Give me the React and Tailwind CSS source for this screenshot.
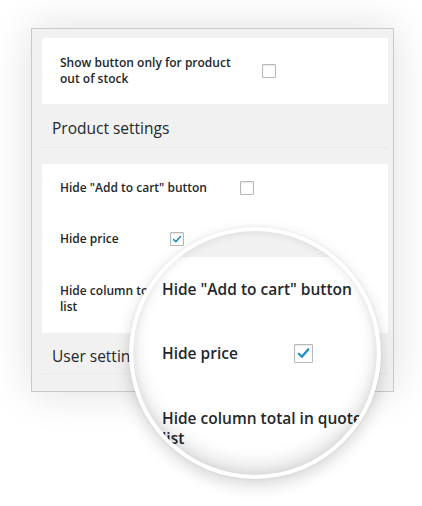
const font = { fontFamily: '"Open Sans", "Noto Sans", sans-serif' };

function Checkbox({ checked, big }) {
  const size = big ? 'w-[19px] h-[19px]' : 'w-[14px] h-[14px]';
  return (
    <span
      className={`${size} shrink-0 inline-flex items-center justify-center bg-white border border-[#b4b9be] rounded-[1px] shadow-[inset_0_1px_2px_rgba(0,0,0,0.1)]`}
    >
      {checked && (
        <svg viewBox="0 0 20 20" className={big ? 'w-[17px] h-[17px]' : 'w-[13px] h-[13px]'}>
          <path d="M4.5 10.2l3.6 3.6 7.6-8.8" fill="none" stroke="#1e8cbe" strokeWidth="2.6" strokeLinecap="round" strokeLinejoin="round" />
        </svg>
      )}
    </span>
  );
}

function Row({ label, labelWidth, gap = 0, checked, className = '' }) {
  return (
    <div className={`flex items-center ${className}`}>
      <div className="text-[12px] leading-[16px] font-semibold text-[#23282d]" style={{ width: labelWidth, marginRight: gap }}>
        {label}
      </div>
      <Checkbox checked={checked} />
    </div>
  );
}

export default function App() {
  return (
    <div className="relative w-[422px] h-[506px] bg-white overflow-hidden" style={font}>
      <div className="ml-[31px] mt-[28px] w-[363px] h-[364px] bg-[#f1f1f1] border border-[#c9c9c9] shadow-[0_0_40px_rgba(0,0,0,0.13)] pl-[10px] pr-[5px] pt-[9px]">
        <div className="bg-white h-[66px] pl-[18px] flex items-center">
          <Row label="Show button only for product out of stock" labelWidth={180} gap={22} />
        </div>

        <div className="h-[44px] flex items-center pl-[10px] border-b border-[#e9e9e9] pt-[6px]">
          <h2 className="text-[15.5px] text-[#23282d] font-normal">Product settings</h2>
        </div>

        <div className="mt-[16px] bg-white h-[169px] pl-[18px] pt-[16px] flex flex-col">
          <Row label={'Hide "Add to cart" button'} labelWidth={180} className="h-[16px]" />
          <Row label="Hide price" labelWidth={110} checked className="h-[16px] mt-[35px]" />
          <div className="mt-[36px] w-[165px] text-[12px] leading-[16px] font-semibold text-[#23282d]">
            Hide column total in quote list
          </div>
        </div>

        <div className="h-[41px] flex items-center pl-[10px] border-b border-[#e9e9e9] pt-[8px]">
          <h2 className="text-[15.5px] text-[#23282d] font-normal">User settings</h2>
        </div>
      </div>

      {/* magnifier lens */}
      <div className="absolute left-[129px] top-[227px] w-[252px] h-[252px] rounded-full bg-white p-[4px] shadow-[0_6px_16px_rgba(0,0,0,0.16),0_0_3px_rgba(0,0,0,0.08)]">
        <div className="relative w-full h-full rounded-full overflow-hidden bg-white">
          <div className="h-[26px] bg-[#f1f1f1]" />
          <div className="pl-[29px] pt-[22px] text-[#23282d] font-semibold text-[15.5px] leading-[20px]">
            <div className="h-[20px] whitespace-nowrap">Hide "Add to cart" button</div>
            <div className="mt-[44px] h-[20px] flex items-center">
              <span className="w-[132px]">Hide price</span>
              <Checkbox checked big />
            </div>
            <div className="mt-[45px] w-[300px]">
              Hide column total in quote
              <br />
              list
            </div>
          </div>
          <div className="absolute inset-0 rounded-full shadow-[inset_0_-10px_18px_rgba(0,0,0,0.12),inset_0_0_10px_rgba(0,0,0,0.08)]" />
        </div>
      </div>
    </div>
  );
}
